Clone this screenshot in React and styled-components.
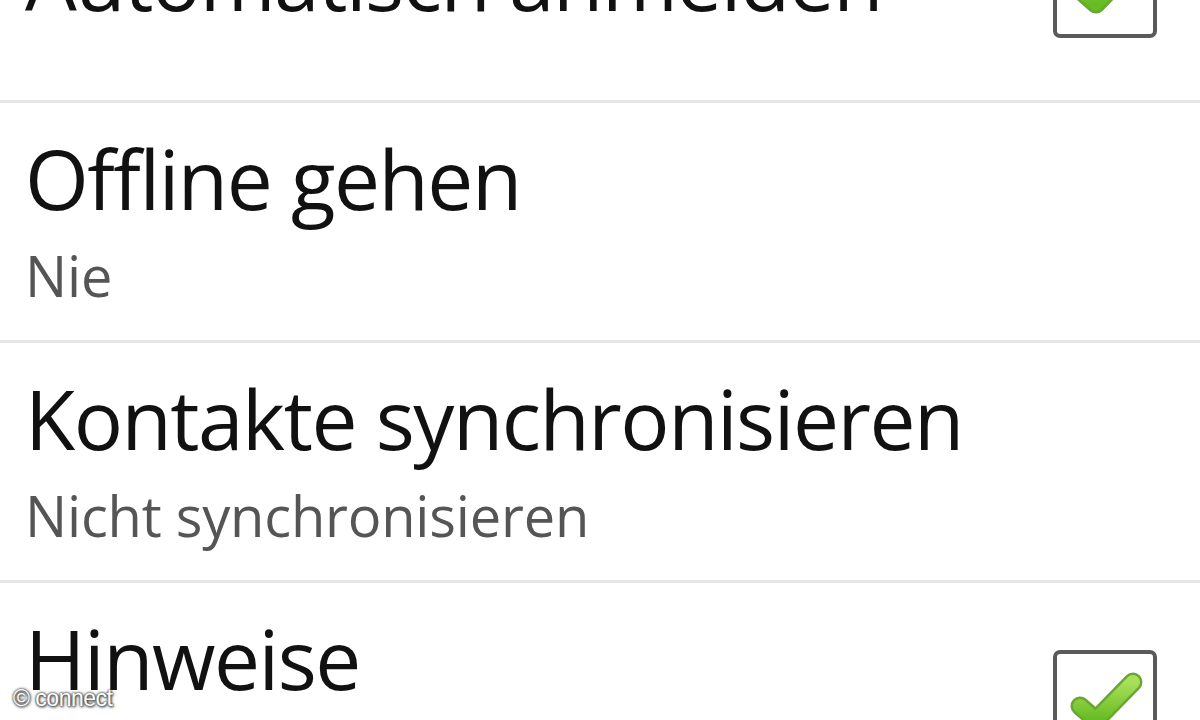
import React from "react";
import styled, { createGlobalStyle } from "styled-components";

const Global = createGlobalStyle`
  html, body { margin: 0; padding: 0; background: #fff; }
  body { width: 1200px; height: 720px; overflow: hidden; }
`;

const Screen = styled.div`
  position: relative;
  width: 1200px;
  height: 720px;
  overflow: hidden;
  background: #fff;
  font-family: "Open Sans", "Noto Sans", sans-serif;
`;

const List = styled.div`
  display: flex;
  flex-direction: column;
  margin-top: -137px;
`;

const Row = styled.div`
  box-sizing: border-box;
  height: 240px;
  display: flex;
  align-items: ${(p) => (p.$single ? "center" : "flex-start")};
  justify-content: space-between;
  padding: ${(p) => (p.$single ? "0" : "25px")} 43px 0 25px;
  border-bottom: 3px solid #e6e6e6;
`;

const TextBlock = styled.div`
  display: flex;
  flex-direction: column;
  margin-top: ${(p) => (p.$single ? "-5px" : "0")};
`;

const Title = styled.div`
  font-size: 82px;
  line-height: 100px;
  color: #111;
  white-space: nowrap;
  letter-spacing: -1.5px;
`;

const Summary = styled.div`
  font-size: 56px;
  line-height: 80px;
  color: #555;
  margin-top: 7px;
  white-space: nowrap;
  letter-spacing: -0.2px;
`;

const CheckWrap = styled.div`
  align-self: center;
  margin-top: ${(p) => (p.$offset ? p.$offset : 0)}px;
  width: 104px;
  height: 104px;
  flex: none;
`;

const Watermark = styled.div`
  position: absolute;
  left: 13px;
  bottom: 11px;
  font-family: "Liberation Sans", Arial, sans-serif;
  font-size: 23px;
  line-height: 22px;
  color: #fff;
  letter-spacing: -0.5px;
  text-shadow: 0 0 2px #444, 0 0 3px #444, 1px 1px 3px #333;
`;

function CheckBox({ offset }) {
  return (
    <CheckWrap $offset={offset}>
      <svg width="104" height="104" viewBox="0 0 104 104">
        <defs>
          <linearGradient id="g" x1="0" y1="0" x2="0" y2="1">
            <stop offset="0" stopColor="#a8e05a" />
            <stop offset="1" stopColor="#66bb22" />
          </linearGradient>
        </defs>
        <rect x="2" y="2" width="100" height="100" rx="5" fill="#fff" stroke="#5a5a5a" strokeWidth="4" />
        <polyline points="27,56 43,70 80,32" fill="none" stroke="#6aa632" strokeWidth="19" strokeLinecap="round" strokeLinejoin="round" />
        <polyline points="27,56 43,70 80,32" fill="none" stroke="url(#g)" strokeWidth="14" strokeLinecap="round" strokeLinejoin="round" />
      </svg>
    </CheckWrap>
  );
}

export default function App() {
  return (
    <Screen>
      <Global />
      <List>
        <Row $single>
          <TextBlock $single>
            <Title>Automatisch anmelden</Title>
          </TextBlock>
          <CheckBox offset={9} />
        </Row>
        <Row>
          <TextBlock>
            <Title>Offline gehen</Title>
            <Summary>Nie</Summary>
          </TextBlock>
        </Row>
        <Row>
          <TextBlock>
            <Title>Kontakte synchronisieren</Title>
            <Summary>Nicht synchronisieren</Summary>
          </TextBlock>
        </Row>
        <Row>
          <TextBlock>
            <Title>Hinweise</Title>
          </TextBlock>
          <CheckBox offset={-24} />
        </Row>
      </List>
      <Watermark>© connect</Watermark>
    </Screen>
  );
}
